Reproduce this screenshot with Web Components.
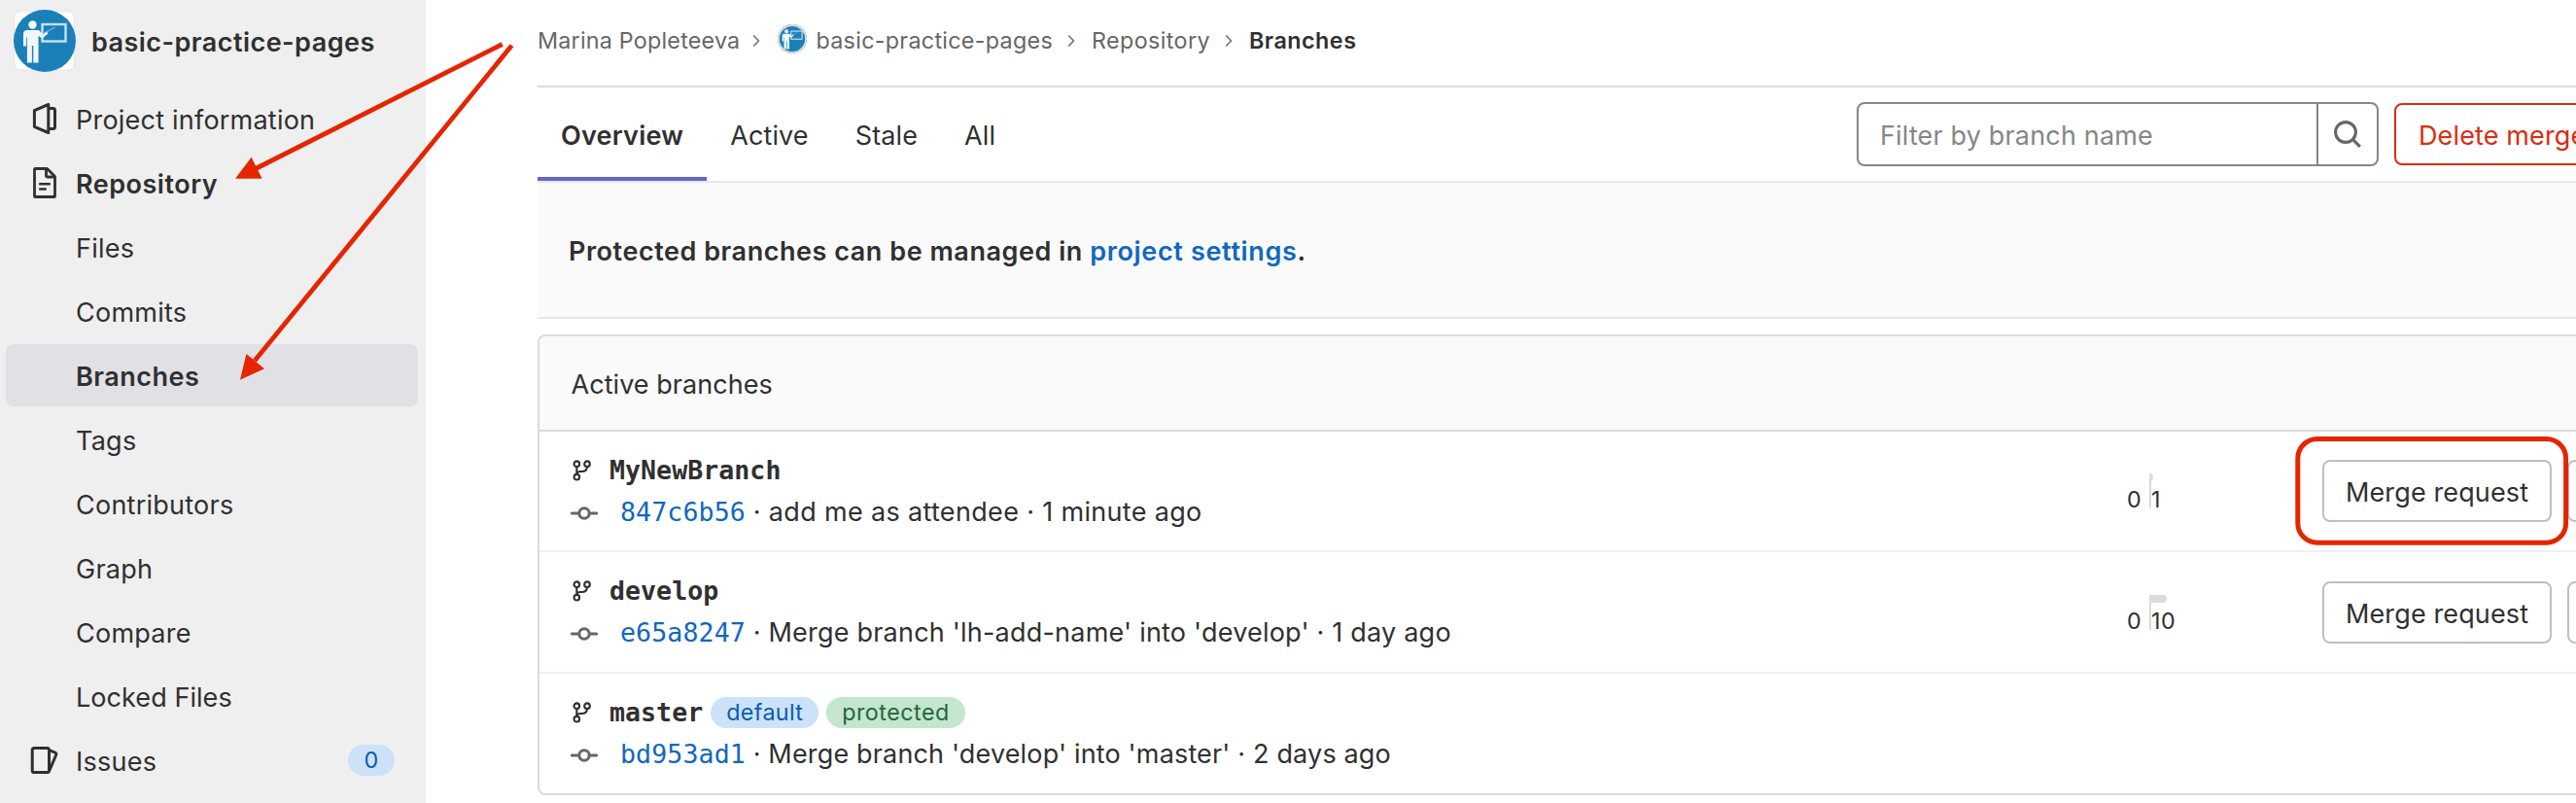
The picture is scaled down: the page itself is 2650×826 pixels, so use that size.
<!DOCTYPE html>
<html lang="en">
<head>
<meta charset="utf-8">
<title>Branches</title>
<style>
body{margin:0;height:826px;overflow:hidden;background:#fff;color:#303030;font:400 27px Inter,"Liberation Sans",sans-serif}
</style>
</head>
<body>
<gl-app></gl-app>
<script>
const define=(name,html)=>{
  const t=document.createElement('template');
  t.innerHTML=html;
  customElements.define(name,class extends HTMLElement{
    constructor(){super();this.attachShadow({mode:'open'}).append(t.content.cloneNode(true));}
  });
};

const ICONS={
  project:['0 0 32 32','<path d="M5.4 7.6 19.8 1.5v29L5.4 24.4Z"/><path d="M20.5 5.5H25a1.5 1.5 0 0 1 1.5 1.5v18a1.5 1.5 0 0 1-1.5 1.5h-4.500"/>',3],
  doc:['0 0 32 32','<path d="M5.500 2.200a.8.8 0 0 1 .8-.7H18.500L26.500 9.500V29.800a.8.8 0 0 1-.8.700H6.300a.8.800 0 0 1-.8-.7Z"/><path d="M17.500 1.500V8.500a1.500 1.500 0 0 0 1.500 1.500h7"/><path d="M11.200 17.300h9.600M11.200 22.500h5.500" stroke-linecap="round" stroke-width="2.600"/>',2.8],
  issues:['0 0 32 32','<rect x="3.200" y="3.400" width="17.300" height="25.200" rx="2.200"/><path d="M20.500 5.700 26.700 8.100a1.800 1.800 0 0 1 1 2.400L20.500 27.500"/>',3],
  branch:['0 0 24 24','<circle cx="5.300" cy="5.200" r="2.800"/><circle cx="16" cy="5.200" r="2.800"/><circle cx="5.300" cy="18.700" r="2.800"/><path d="M5.300 8v8M16 8c0 3-1.500 4.700-4.500 4.900l-3 .1q-3 .3-3.200 3"/>',2.1],
  commit:['0 0 28 14','<circle cx="14" cy="7" r="5.200"/><path d="M1.400 7H8.500M19.500 7h7.100" stroke-linecap="round"/>',3],
  search:['0 0 32 32','<circle cx="13" cy="13" r="10.400"/><path d="m20.500 20.500 7.300 7.300"/>',3.1],
  chevron:['0 0 8 14','<path d="M1.200 1.500 6.500 7l-5.300 5.500"/>',1.8]
};
customElements.define('gl-icon',class extends HTMLElement{
  connectedCallback(){
    const [box,body,w]=ICONS[this.getAttribute('name')];
    const [,,a,b]=box.split(' ');
    this.attachShadow({mode:'open'}).innerHTML=`<style>:host{display:block;flex:none;width:${a}px;height:${b}px}svg{display:block}</style>
    <svg width="${a}" height="${b}" viewBox="${box}" fill="none" stroke="currentColor" stroke-width="${w}" stroke-linejoin="round">${body}</svg>`;
  }
});

define('gl-avatar',`<style>:host{display:block;flex:none;width:64px;height:64px}svg{display:block;width:100%;height:100%}.r{display:none}:host([round]) .r{display:block}:host([round]) .s{display:none}</style>
<svg viewBox="0 0 64 64"><rect class="s" x=".8" y="1.800" width="61.500" height="60.400" rx="6" fill="#fff" stroke="#e4e4e4" stroke-width="1"/><circle cx="32" cy="32" r="32" fill="#1c80b8"/><circle class="r" cx="32" cy="32" r="30" fill="none" stroke="#d9dde0" stroke-width="4"/>
<rect x="29.500" y="15" width="24" height="17.500" fill="none" stroke="#c9e1ef" stroke-width="2.400"/>
<path d="M30 25 42.500 18" stroke="#7fb7d8" stroke-width="1.200"/>
<circle cx="19.500" cy="15.500" r="4.200" fill="#f4f9fc"/>
<path d="M14 21h12l4 4.500 4-3 1.500 2-6 5-4-2.500V54.500h-5.200V37h-1.400v17.500h-5V28.500h-.8V37.500H10V25q0-4 4-4Z" fill="#f0f7fb"/></svg>`);

define('gl-nav-item',`<style>
:host{display:flex;align-items:center;box-sizing:border-box;height:64px;margin:0 8px 2px 6px;padding:0 24px;border-radius:8px;letter-spacing:.24px}
:host([bold]){font-weight:600;letter-spacing:.5px}
:host([active]){background:#e1e0e5}
.i{width:48px;flex:none}
.t{flex:1;padding-top:2px;white-space:nowrap}
</style><div class="i"><slot name="icon"></slot></div><div class="t"><slot></slot></div><slot name="badge"></slot>`);

define('gl-badge',`<style>
:host{display:inline-block;box-sizing:border-box;height:32px;line-height:32px;padding:0 16px;border-radius:16px;background:#cbe2f9;color:#0b5cad;font-size:23.300px;font-weight:400;letter-spacing:.34px}
:host([green]){background:#c3e6cd;color:#24663b;letter-spacing:.5px}
</style><slot></slot>`);

define('gl-sidebar',`<style>
:host{display:block;flex:none;width:438px;height:826px;overflow:hidden;background:#efefef}
.h{display:flex;align-items:center;gap:16px;height:90px;box-sizing:border-box;padding:0 0 6px 14px;font-weight:600;letter-spacing:.46px}
.h span{padding-top:2px}
gl-badge{margin-right:.500px}
</style>
<div class="h"><gl-avatar></gl-avatar><span>basic-practice-pages</span></div>
<gl-nav-item style="letter-spacing:.22px"><gl-icon slot="icon" name="project"></gl-icon>Project information</gl-nav-item>
<gl-nav-item bold><gl-icon slot="icon" name="doc"></gl-icon>Repository</gl-nav-item>
<gl-nav-item>Files</gl-nav-item>
<gl-nav-item>Commits</gl-nav-item>
<gl-nav-item bold active>Branches</gl-nav-item>
<gl-nav-item>Tags</gl-nav-item>
<gl-nav-item>Contributors</gl-nav-item>
<gl-nav-item>Graph</gl-nav-item>
<gl-nav-item>Compare</gl-nav-item>
<gl-nav-item style="letter-spacing:.06px">Locked Files</gl-nav-item>
<gl-nav-item><gl-icon slot="icon" name="issues"></gl-icon>Issues<gl-badge slot="badge">0</gl-badge></gl-nav-item>`);

define('gl-breadcrumbs',`<style>
:host{display:flex;align-items:center;height:90px;box-sizing:border-box;padding-bottom:5px;border-bottom:2px solid #dbdbdb;color:#666;font-size:23.300px;letter-spacing:.3px;white-space:nowrap}
gl-icon{margin:0 17px 0 15px;color:#777}
gl-avatar{width:30px;height:30px;margin:-3px 9px 0 0}
b{font-weight:600;color:#303030;letter-spacing:.5px}
</style><span style="letter-spacing:.22px">Marina Popleteeva</span><gl-icon name="chevron" style="margin-left:13px;margin-right:18px"></gl-icon><gl-avatar round></gl-avatar><span>basic-practice-pages</span><gl-icon name="chevron"></gl-icon><span style="letter-spacing:.4px">Repository</span><gl-icon name="chevron"></gl-icon><b>Branches</b>`);

define('gl-tab',`<style>
:host{display:block;height:96px;line-height:100px;padding:0 24px;letter-spacing:.12px}
:host([active]){font-weight:600;letter-spacing:.23px;box-shadow:inset 0 -4px #6666c4}
</style><slot></slot>`);

define('gl-search',`<style>
:host{display:flex;box-sizing:border-box;width:537px;height:66px;border:2px solid #868686;border-radius:8px;line-height:65px;color:#868686;letter-spacing:.16px}
.f{flex:1;padding-left:22px}
.b{width:60px;border-left:2px solid #868686;color:#666}
gl-icon{margin:16px 0 0 15px}
</style><div class="f">Filter by branch name</div><div class="b"><gl-icon name="search"></gl-icon></div>`);

define('gl-button',`<style>
:host{display:block;flex:none;box-sizing:border-box;height:64px;line-height:63px;padding:0 23px;border:2px solid #bfbfbf;border-radius:8px;background:#fff;letter-spacing:.12px;white-space:nowrap}
:host([danger]){border-color:#dd2b0e;color:#dd2b0e}
</style><slot></slot>`);

define('gl-toolbar',`<style>
:host{display:flex;height:96px;border-bottom:2px solid #e8e8e8}
nav{display:flex;flex:none;width:1357px}
gl-search{flex:none;margin:15px 16px 0 0}
gl-button{margin-top:16px}
</style><nav><gl-tab active>Overview</gl-tab><gl-tab>Active</gl-tab><gl-tab>Stale</gl-tab><gl-tab>All</gl-tab></nav><gl-search></gl-search><gl-button danger>Delete merged branches</gl-button>`);

define('gl-notice',`<style>
:host{display:block;height:138px;line-height:142px;padding-left:32px;background:#fafafa;border-bottom:2px solid #e8e8e8;font-weight:600;letter-spacing:.54px;white-space:nowrap}
a{color:#1068bf;letter-spacing:.66px}
</style>Protected branches can be managed in <a>project settings</a>.`);

define('gl-diverge',`<style>
:host{display:flex;height:36px;font-size:23.300px;line-height:36px}
span{padding-top:9px}
.l{width:23px}
.bar{width:2px;height:36px;background:#dbdbdb}
.bar i{display:block;width:var(--n,4px);height:8px;background:#dbdbdb;border-radius:0 4px 4px 0}
</style><span class="l">0</span><div class="bar"><i></i></div><span><slot></slot></span>`);

define('gl-branch',`<style>
:host{display:flex;box-sizing:border-box;height:124px;border-bottom:2px solid #f0f0f0}
.info{flex:none;width:1633px;box-sizing:border-box;padding:19px 0 0 32px;white-space:nowrap}
.line{display:flex;align-items:center;height:42px;line-height:42px}
.n{font:700 26.600px/42px "DejaVu Sans Mono",monospace;letter-spacing:.03px;margin-right:8px}
.line gl-icon[name=branch]{margin:0 15px 0 1px}
.line gl-icon[name=commit]{margin:3px 23px 0 0;color:#666}
.m{letter-spacing:var(--ls,.21px);padding-top:1.500px}
.sha{font:400 26.600px/1px "DejaVu Sans Mono",monospace;color:#1068bf;letter-spacing:.1px}
.line slot[name=badges]{display:flex;gap:8px}
.act{display:flex;flex:none;gap:16px;padding-top:var(--top,29px)}
.act gl-button{width:236px;padding:0 22px}
.div{flex:none;width:201px;padding-top:43px}
:host([last]) .div,:host([last]) .act{display:none}
</style>
<div class="info"><div class="line"><gl-icon name="branch"></gl-icon><span class="n"><slot name="name"></slot></span><slot name="badges"></slot></div>
<div class="line"><gl-icon name="commit"></gl-icon><span class="m"><span class="sha"><slot name="sha"></slot></span> · <slot></slot></span></div></div>
<div class="div"><slot name="diverge"></slot></div><div class="act"><gl-button>Merge request</gl-button><gl-button></gl-button></div>`);

define('gl-branches',`<style>
:host{display:block;box-sizing:border-box;height:474px;margin-top:16px;border:2px solid #dbdbdb;border-radius:8px;overflow:hidden}
.h{height:96px;line-height:100px;padding-left:32.500px;background:#fafafa;border-bottom:2px solid #dbdbdb;letter-spacing:.05px}
</style>
<div class="h">Active branches</div>
<gl-branch style="--ls:.33px"><span slot="name">MyNewBranch</span><span slot="sha">847c6b56</span>add me as attendee · 1 minute ago<gl-diverge slot="diverge">1</gl-diverge></gl-branch>
<gl-branch style="height:125px;--top:30px"><span slot="name">develop</span><span slot="sha">e65a8247</span>Merge branch 'lh-add-name' into 'develop' · 1 day ago<gl-diverge slot="diverge" style="--n:18px;margin-top:1px;letter-spacing:.5px">10</gl-diverge></gl-branch>
<gl-branch last style="border:0;--ls:.16px"><span slot="name">master</span><gl-badge slot="badges">default</gl-badge><gl-badge slot="badges" green>protected</gl-badge><span slot="sha">bd953ad1</span>Merge branch 'develop' into 'master' · 2 days ago</gl-branch>`);

define('gl-annotations',`<style>:host{position:absolute;left:0;top:0;pointer-events:none}svg{display:block}</style>
<svg width="2650" height="826" fill="none" stroke="#e42500" stroke-width="4.800">
<path d="M516.700 45.500 263 173.500M526.500 46.700 262 371"/>
<path d="M242 183.700 258.600 161.700 269.600 183.700ZM247 390.700 253.400 364 272 379.300Z" fill="#e42500" stroke="none"/>
<rect x="2363.800" y="451.500" width="275.800" height="106.700" rx="20" stroke-width="5"/></svg>`);

define('gl-app',`<style>
:host{display:flex;height:826px;overflow:hidden;position:relative}
main{flex:none;width:2340px;margin-left:115px}
</style>
<gl-sidebar></gl-sidebar>
<main><gl-breadcrumbs></gl-breadcrumbs><gl-toolbar></gl-toolbar><gl-notice></gl-notice><gl-branches></gl-branches></main>
<gl-annotations></gl-annotations>`);
</script>
</body>
</html>
